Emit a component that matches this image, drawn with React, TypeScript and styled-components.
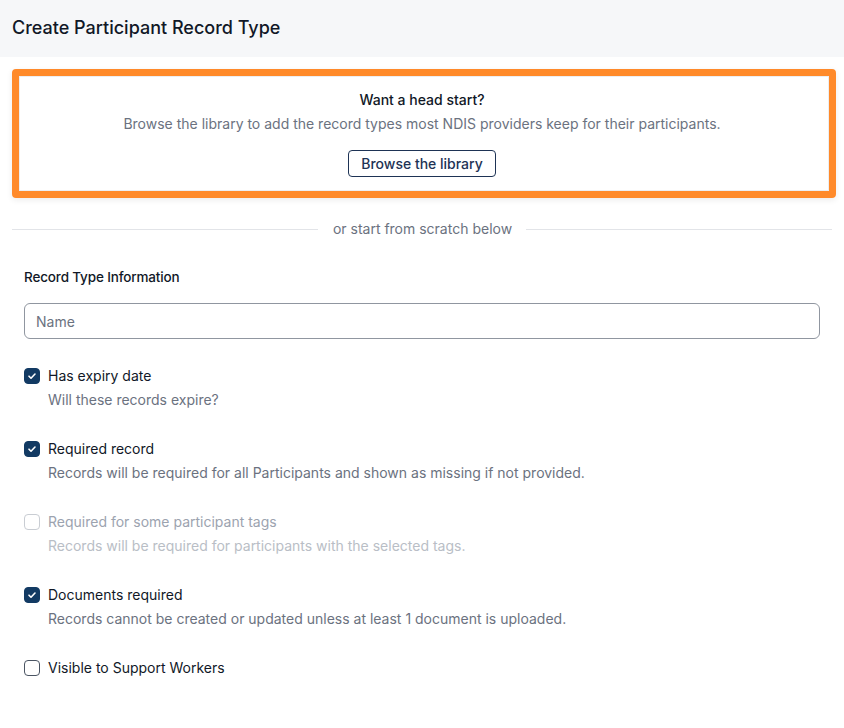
import React from "react";
import styled, { createGlobalStyle } from "styled-components";

const GlobalStyle = createGlobalStyle`
  body {
    margin: 0;
    background: #ffffff;
    font-family: Inter, "Noto Sans", sans-serif;
    color: #111827;
  }
  * { box-sizing: border-box; }
`;

const options = [
  { label: "Has expiry date", hint: "Will these records expire?", checked: true },
  {
    label: "Required record",
    hint: "Records will be required for all Participants and shown as missing if not provided.",
    checked: true,
  },
  {
    label: "Required for some participant tags",
    hint: "Records will be required for participants with the selected tags.",
    checked: false,
    disabled: true,
  },
  {
    label: "Documents required",
    hint: "Records cannot be created or updated unless at least 1 document is uploaded.",
    checked: true,
  },
  { label: "Visible to Support Workers", checked: false },
];

export default function App() {
  return (
    <>
      <GlobalStyle />
      <Header>
        <Title>Create Participant Record Type</Title>
      </Header>
      <Main>
        <Highlight>
          <StartCard>
            <StartTitle>Want a head start?</StartTitle>
            <StartText>
              Browse the library to add the record types most NDIS providers keep for their participants.
            </StartText>
            <OutlineButton type="button">Browse the library</OutlineButton>
          </StartCard>
        </Highlight>

        <Divider>
          <DividerText>or start from scratch below</DividerText>
        </Divider>

        <Form>
          <SectionTitle>Record Type Information</SectionTitle>
          <NameInput placeholder="Name" />
          <OptionList>
            {options.map((o) => (
              <OptionRow key={o.label} $disabled={o.disabled}>
                <Box $checked={o.checked} $disabled={o.disabled}>
                  {o.checked && (
                    <svg width="10" height="10" viewBox="0 0 10 10">
                      <path
                        d="M2 5.2l2 2L8 3"
                        fill="none"
                        stroke="#fff"
                        strokeWidth="1.6"
                        strokeLinecap="round"
                        strokeLinejoin="round"
                      />
                    </svg>
                  )}
                </Box>
                <OptionText>
                  <OptionLabel $disabled={o.disabled}>{o.label}</OptionLabel>
                  {o.hint && <OptionHint $disabled={o.disabled}>{o.hint}</OptionHint>}
                </OptionText>
              </OptionRow>
            ))}
          </OptionList>
        </Form>
      </Main>
    </>
  );
}

const Header = styled.header`
  height: 57px;
  background: #f6f7f9;
  display: flex;
  align-items: center;
  padding: 0 12px 2px;
`;

const Title = styled.h1`
  margin: 0;
  font-size: 18px;
  font-weight: 500;
  color: #111827;
`;

const Main = styled.main`
  padding: 12px 8px 24px 12px;
`;

const Highlight = styled.div`
  border: 7px solid #ff8a2a;
  border-radius: 4px;
  box-shadow: 0 2px 6px rgba(0, 0, 0, 0.08);
`;

const StartCard = styled.div`
  border: 1px solid #eceef1;
  background: #fff;
  padding: 13px 18px 13px 14px;
  display: flex;
  flex-direction: column;
  align-items: center;
`;

const StartTitle = styled.div`
  font-size: 14px;
  line-height: 20px;
  font-weight: 500;
  color: #111827;
`;

const StartText = styled.div`
  margin-top: 4px;
  font-size: 14px;
  line-height: 20px;
  color: #6b7280;
`;

const OutlineButton = styled.button`
  margin-top: 16px;
  height: 27px;
  padding: 0 12px;
  border: 1px solid #1e3355;
  border-radius: 4px;
  background: #fff;
  color: #1e3355;
  font-family: inherit;
  font-size: 14px;
  font-weight: 500;
  cursor: pointer;
`;

const Divider = styled.div`
  margin: 21px 4px 0 0;
  display: flex;
  align-items: center;
  &::before,
  &::after {
    content: "";
    flex: 1;
    height: 1px;
    background: #e2e4e8;
  }
`;

const DividerText = styled.span`
  padding: 0 14px 0 15px;
  font-size: 14px;
  line-height: 20px;
  color: #6b7280;
`;

const Form = styled.section`
  padding: 28px 16px 0 12px;
`;

const SectionTitle = styled.h2`
  margin: 0;
  font-size: 13.5px;
  line-height: 20px;
  font-weight: 500;
  letter-spacing: -0.15px;
  color: #111827;
`;

const NameInput = styled.input`
  display: block;
  width: 100%;
  margin-top: 16px;
  height: 36px;
  padding: 0 11px;
  border: 1px solid #9096a0;
  border-radius: 6px;
  font-family: inherit;
  font-size: 14px;
  color: #111827;
  &::placeholder {
    color: #6b7280;
  }
`;

const OptionList = styled.div`
  margin-top: 27px;
  display: flex;
  flex-direction: column;
  gap: 29px;
`;

const OptionRow = styled.label<{ $disabled?: boolean }>`
  display: flex;
  align-items: flex-start;
  gap: 8px;
  cursor: ${(p) => (p.$disabled ? "default" : "pointer")};
`;

const Box = styled.span<{ $checked?: boolean; $disabled?: boolean }>`
  flex: none;
  width: 16px;
  height: 16px;
  margin-top: 2px;
  border-radius: 4px;
  display: flex;
  align-items: center;
  justify-content: center;
  background: ${(p) => (p.$checked ? "#123a63" : "#fff")};
  border: 1px solid
    ${(p) => (p.$checked ? "#123a63" : p.$disabled ? "#c9cdd3" : "#4b5563")};
`;

const OptionText = styled.div`
  display: flex;
  flex-direction: column;
  gap: 4px;
`;

const OptionLabel = styled.span<{ $disabled?: boolean }>`
  font-size: 14px;
  line-height: 20px;
  color: ${(p) => (p.$disabled ? "#9ca3af" : "#111827")};
`;

const OptionHint = styled.span<{ $disabled?: boolean }>`
  font-size: 14px;
  line-height: 20px;
  color: ${(p) => (p.$disabled ? "#b9bec6" : "#6b7280")};
`;
